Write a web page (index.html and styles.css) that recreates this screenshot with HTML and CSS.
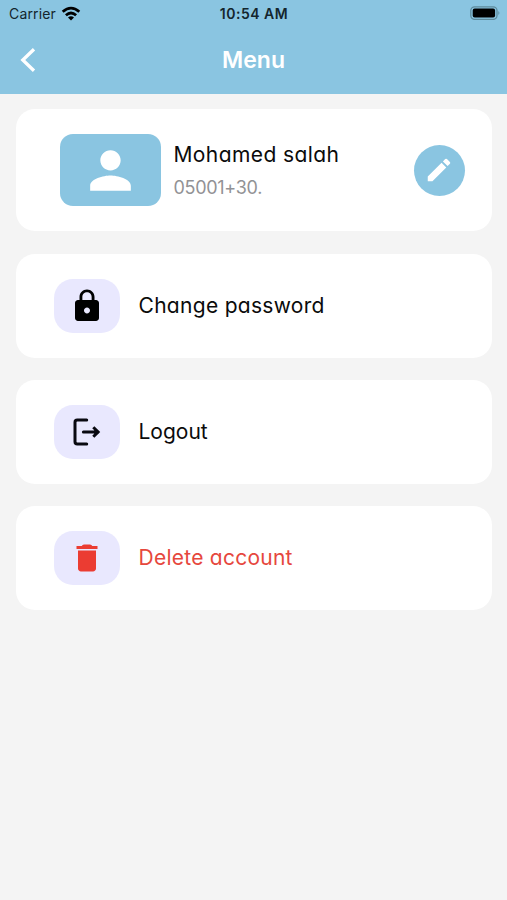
FILE: index.html
```html
<!DOCTYPE html>
<html lang="en">
<head>
<meta charset="utf-8">
<title>Menu</title>
<link rel="stylesheet" href="styles.css">
</head>
<body>
<header class="header">
  <div class="status">
    <div class="carrier"><span class="carrier-name">Carrier</span>
      <svg class="wifi" viewBox="0 0 20 15"><path d="M1.700 5.800Q10-1.500 18.300 5.800M4.900 9.200Q10 4.700 15.100 9.200" fill="none" stroke="#000" stroke-width="2.800"/><path d="M7 11.400Q10 9 13 11.400L10 14.500Z"/></svg>
    </div>
    <span class="clock">10:54 AM</span>
    <svg class="battery" viewBox="0 0 31 14"><rect x=".8" y=".8" width="26.2" height="12.6" rx="3.8" fill="none" stroke="#5d8a9c" stroke-width="1.3"/><rect x="2.7" y="2.6" width="22.4" height="9" rx="2"/><path d="M28.4 5q2 2 0 4z" fill="#5d8a9c"/></svg>
  </div>
  <div class="bar">
    <svg class="back" viewBox="0 0 18 26"><path d="M14 2.300 2.800 13 14 23.700" fill="none" stroke="#fff" stroke-width="3.300"/></svg>
    <h1 class="title">Menu</h1>
    <span class="bar-end"></span>
  </div>
</header>
<main class="list">
  <section class="card profile">
    <div class="avatar"><svg viewBox="0 0 24 24"><path d="M12 12c2.21 0 4-1.79 4-4s-1.79-4-4-4-4 1.79-4 4 1.79 4 4 4zm0 2c-2.67 0-8 1.34-8 4v2h16v-2c0-2.66-5.33-4-8-4z"/></svg></div>
    <div class="who"><span class="label name">Mohamed salah</span><span class="phone">05001+30.</span></div>
    <div class="edit"><svg viewBox="0 0 24 24"><path d="M3 17.25V21h3.75L17.81 9.94l-3.75-3.75L3 17.25zM20.71 7.04a1 1 0 0 0 0-1.41l-2.34-2.34a1 1 0 0 0-1.41 0l-1.83 1.83 3.75 3.75 1.83-1.83z"/></svg></div>
  </section>
  <section class="card item">
    <div class="tile"><svg viewBox="0 0 24 24"><path d="M18 8h-1V6c0-2.760-2.240-5-5-5S7 3.240 7 6v2H6c-1.100 0-2 .9-2 2v10c0 1.100.9 2 2 2h12c1.100 0 2-.9 2-2V10c0-1.100-.9-2-2-2zm-6 9c-1.100 0-2-.9-2-2s.9-2 2-2 2 .9 2 2-.9 2-2 2zm3.100-9H8.900V6c0-1.710 1.390-3.100 3.100-3.100s3.100 1.390 3.100 3.100v2z"/></svg></div>
    <span class="label change">Change password</span>
  </section>
  <section class="card item">
    <div class="tile"><svg viewBox="0 0 24 24" fill="none" stroke="#090910" stroke-width="2" stroke-linecap="round"><path d="M11.800 4H5.500Q4 4 4 5.500v13Q4 20 5.500 20h6.300"/><path d="M9.600 12h9.400"/><path d="m16.200 8.800 3.200 3.200-3.200 3.200" stroke-linecap="butt"/><path d="M16.800 10.200v3.600L18.800 12z" fill="#090910" stroke="none"/></svg></div>
    <span class="label logout">Logout</span>
  </section>
  <section class="card item danger">
    <div class="tile"><svg viewBox="0 0 24 24"><path d="M6 19c0 1.100.9 2 2 2h8c1.100 0 2-.9 2-2V7H6v12zM19 4h-3.500l-.6-.6Q14.500 3 14 3h-4q-.5 0-.9.400l-.6.600H5v2h14V4z"/></svg></div>
    <span class="label delete">Delete account</span>
  </section>
</main>
</body>
</html>
```
FILE: styles.css
```css
* { box-sizing: border-box; }
body {
  margin: 0;
  min-height: 900px;
  background: #f4f4f4;
  color: #0b0b0b;
  font-family: Inter, "Liberation Sans", sans-serif;
}
svg { display: block; }
span, h1 { white-space: nowrap; }
.header { height: 94px; background: #8ac5e1; }
.status {
  display: grid;
  grid-template-columns: 1fr auto 1fr;
  align-items: center;
  height: 27px;
  padding: 0 6px 0 9px;
  color: #14252d;
}
.carrier { display: flex; align-items: center; gap: 5px; font-size: 14px; }
.carrier-name { letter-spacing: .15px; }
.wifi { width: 20px; height: 15px; margin-top: -1px; }
.clock { font-size: 14px; font-weight: 600; letter-spacing: .5px; margin-left: -2px; }
.battery { width: 31px; height: 14px; margin-top: -1px; justify-self: end; }
.bar {
  display: grid;
  grid-template-columns: 18px 1fr 18px;
  align-items: center;
  height: 66px;
  padding: 0 20px;
}
.back { width: 18px; height: 26px; }
.title {
  margin: 0;
  text-align: center;
  font-size: 23px;
  font-weight: 600;
  line-height: 30px;
  color: #fff;
}
.list { display: grid; gap: 22px; padding: 15px 15.500px 0 16px; }
.card {
  display: flex;
  align-items: center;
  height: 104px;
  border-radius: 19px;
  background: #fff;
}
.profile { height: 122px; margin-bottom: 1px; padding: 0 27px 0 43.500px; }
.avatar, .edit, .tile { display: flex; align-items: center; justify-content: center; }
.avatar { width: 101px; height: 72px; border-radius: 13px; background: #8ac5e1; fill: #fff; }
.avatar svg { width: 61px; height: 61px; }
.who { display: flex; flex-direction: column; flex: 1; margin-left: 13px; gap: 6px; padding-top: 2px; }
.label { font-size: 21px; line-height: 28px; font-feature-settings: "cv11"; }
.name { letter-spacing: .4px; }
.change { letter-spacing: .3px; }
.logout { letter-spacing: 0; }
.delete { letter-spacing: .25px; }
.phone { font-size: 18px; line-height: 26px; letter-spacing: -.3px; color: #929295; }
.edit { width: 51px; height: 51px; border-radius: 50%; background: #8ac5e1; fill: #fff; }
.edit svg { width: 30px; height: 30px; }
.item { padding-left: 37.500px; gap: 19px; }
.tile { width: 66px; height: 54px; border-radius: 19px; background: #e9e8fe; }
.tile svg { width: 36px; height: 36px; }
.danger { color: #e6473d; }
.danger svg { fill: #eb3c32; }
```
